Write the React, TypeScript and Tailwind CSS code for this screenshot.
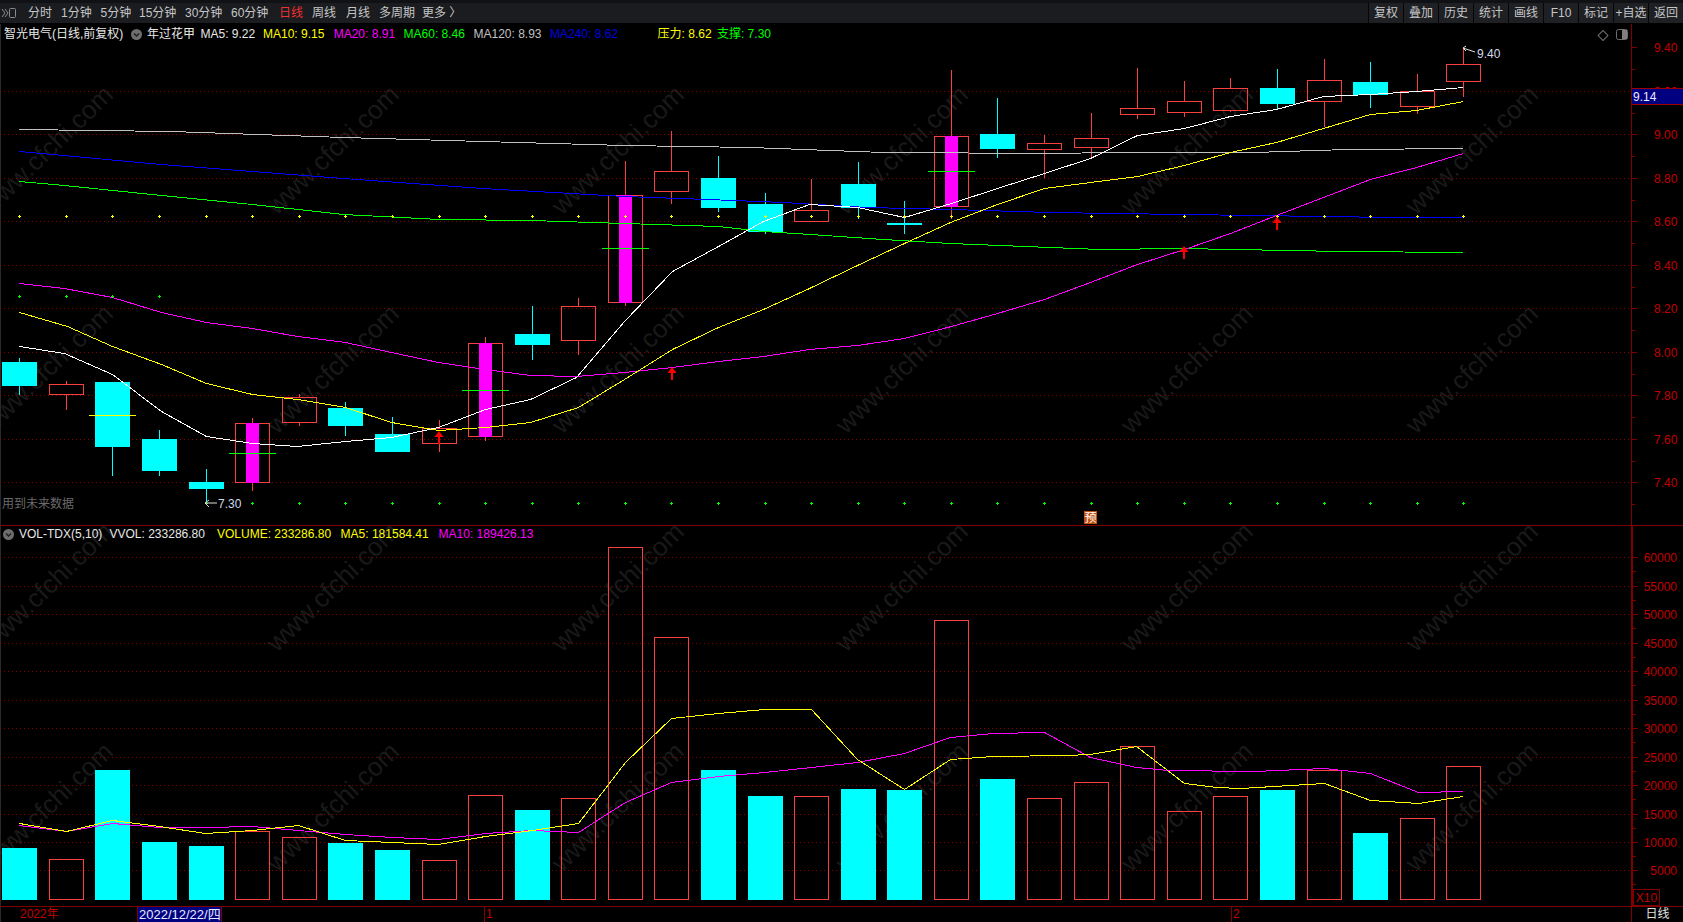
const RED = "#f84040"
const CYAN = "#00ffff"
const MAGENTA = "#ff00ff"
const YELLOW = "#ffff00"
const GRID = "#8c0000"
const AXIS = "#7c0000"
const AXIS_TEXT = "#c00000"

const periods = [
  { label: "分时", w: 33 },
  { label: "1分钟", w: 39.5 },
  { label: "5分钟", w: 38.5 },
  { label: "15分钟", w: 46 },
  { label: "30分钟", w: 46 },
  { label: "60分钟", w: 48 },
  { label: "日线", w: 33, active: true },
  { label: "周线", w: 34 },
  { label: "月线", w: 33 },
  { label: "多周期", w: 43 },
  { label: "更多 〉", w: 50 },
]

const actions = ["复权", "叠加", "历史", "统计", "画线", "F10", "标记", "+自选", "返回"]

const legend = [
  { text: "智光电气(日线,前复权)", color: "#e8e8e8", w: 127 },
  { text: "", color: "", w: 16, icon: true },
  { text: "年过花甲", color: "#e8e8e8", w: 53.5 },
  { text: "MA5: 9.22", color: "#e8e8e8", w: 62.5 },
  { text: "MA10: 9.15", color: YELLOW, w: 70.7 },
  { text: "MA20: 8.91", color: MAGENTA, w: 69.9 },
  { text: "MA60: 8.46", color: "#00ff00", w: 69.9 },
  { text: "MA120: 8.93", color: "#c0c0c0", w: 76.5 },
  { text: "MA240: 8.62", color: "#0000e0", w: 107.6 },
  { text: "压力: 8.62", color: YELLOW, w: 59.4 },
  { text: "支撑: 7.30", color: "#00ff00", w: 70 },
]

const volLegend = [
  { text: "VOL-TDX(5,10)", color: "#e8e8e8", w: 90.5 },
  { text: "VVOL: 233286.80", color: "#e8e8e8", w: 107.5 },
  { text: "VOLUME: 233286.80", color: YELLOW, w: 123.6 },
  { text: "MA5: 181584.41", color: YELLOW, w: 98 },
  { text: "MA10: 189426.13", color: MAGENTA, w: 110 },
]

// top, bottom, wick top, wick bottom, kind
type Kind = "c" | "r" | "m"
const candles: [number, number, number, number, Kind][] = [
  [362, 386, 358, 395, "c"],
  [384, 395, 381, 410, "r"],
  [382, 447, 382, 476, "c"],
  [439, 471, 430, 476, "c"],
  [482, 489, 469, 503, "c"],
  [423, 483, 418, 491, "m"],
  [397, 423, 394, 426, "r"],
  [408, 426, 402, 436, "c"],
  [434, 452, 417, 452, "c"],
  [428, 444, 420, 452, "r"],
  [343, 437, 337, 441, "m"],
  [334, 345, 306, 360, "c"],
  [306, 341, 298, 355, "r"],
  [195, 303, 161, 306, "m"],
  [171, 192, 131, 204, "r"],
  [178, 208, 156, 212, "c"],
  [204, 232, 193, 234, "c"],
  [210, 222, 179, 222, "r"],
  [184, 208, 162, 219, "c"],
  [223, 225, 201, 234, "c"],
  [136, 207, 70, 219, "m"],
  [134, 149, 98, 158, "c"],
  [143, 150, 135, 178, "r"],
  [138, 148, 113, 158, "r"],
  [108, 115, 68, 119, "r"],
  [101, 113, 81, 117, "r"],
  [88, 111, 78, 112, "r"],
  [88, 104, 69, 110, "c"],
  [80, 102, 59, 127, "r"],
  [82, 95, 62, 108, "c"],
  [91, 107, 74, 114, "r"],
  [64, 82, 48, 97, "r"],
]

const volTops = [
  848, 859, 770, 842, 846, 831, 837, 843, 850, 860, 795, 810, 798, 547, 637, 770,
  796, 796, 789, 790, 620, 779, 798, 782, 746, 811, 796, 790, 770, 833, 818, 766,
]

const cx = (i: number) => Math.round(19.3 + 46.58 * i)

const lines = {
  white: "19,346 64,353 112,374 161,411 206,436 252,443 297,446 345,441 391,437 438,427 485,409 530,399 576,377 624,321 672,271 718,246 763,221 809,204 857,207 904,217 951,203 997,188 1044,173 1090,158 1137,135 1184,128 1230,116 1276,109 1323,96 1370,94 1416,91 1463,87",
  yellow: "19,312 67,326 112,346 161,364 206,383 252,394 297,399 345,407 391,422 438,430 485,427 530,422 578,407 624,379 672,349 718,327 763,309 809,288 857,265 904,243 950,222 997,204 1044,188 1090,182 1137,176 1184,165 1230,152 1276,142 1323,128 1370,114 1416,110 1463,101",
  magenta: "19,283 64,288 112,297 161,312 206,322 252,328 297,336 345,342 391,352 438,362 485,369 530,375 576,376 624,372 672,367 718,361 763,356 809,349 857,345 904,338 951,326 997,313 1044,299 1090,282 1137,264 1184,249 1230,233 1276,215 1323,197 1370,179 1416,167 1463,153",
  green: "19,181 64,185 161,195 252,204 343,214 439,219 530,220 624,223 718,226 763,231 810,234 883,239 950,243 1050,247 1100,249 1180,248 1342,251 1463,252",
  blue: "19,151 161,164 343,178 482,188 624,196 707,199 783,202 867,207 950,209 1050,212 1113,213 1253,215 1393,217 1463,217",
  gray: "19,129 171,131 343,137 482,141 624,145 750,147 883,152 1050,153 1113,152 1253,152 1347,149 1463,148",
  volYellow: "19,823 66,831 112,820 159,826 205,833 252,830 298,825 345,840 392,842 438,844 485,836 532,830 578,823 625,762 671,718 718,713 764,709 811,709 857,759 904,789 950,759 993,756 1066,755 1090,754 1136,746 1184,783 1216,787 1240,788 1324,783 1370,800 1418,803 1463,796",
  volMagenta: "19,825 66,831 112,823 159,827 205,827 252,826 298,830 345,834 392,837 438,839 485,833 532,830 578,832 625,802 671,782 718,776 764,772 811,767 857,762 904,753 950,737 993,733 1044,732 1090,757 1136,767 1168,770 1254,771 1324,768 1370,773 1418,792 1463,791",
}

const priceGrid = [91, 134, 178, 221, 265, 308, 352, 395, 439, 482]
const priceLabels = [
  { y: 47, t: "9.40" }, { y: 91, t: "9.20" }, { y: 134, t: "9.00" }, { y: 178, t: "8.80" },
  { y: 221, t: "8.60" }, { y: 265, t: "8.40" }, { y: 308, t: "8.20" }, { y: 352, t: "8.00" },
  { y: 395, t: "7.80" }, { y: 439, t: "7.60" }, { y: 482, t: "7.40" },
]
const volLabels = [
  { y: 557, t: "60000" }, { y: 586, t: "55000" }, { y: 614, t: "50000" }, { y: 643, t: "45000" },
  { y: 671, t: "40000" }, { y: 700, t: "35000" }, { y: 728, t: "30000" }, { y: 757, t: "25000" },
  { y: 785, t: "20000" }, { y: 814, t: "15000" }, { y: 842, t: "10000" }, { y: 870, t: "5000" },
]
const ticks: [number, number, string][] = [
  [112, 415, YELLOW],
  [252, 453, "#00ff00"],
  [485, 390, "#00ff00"],
  [625, 248, "#00ff00"],
  [951, 171, "#00ff00"],
]

const wmColumns = [-10, 276, 561, 845, 1130, 1415]
const wmRows = [216, 435, 653, 873]

function Poly({ points, color }: { points: string; color: string }) {
  // half pixel shift, otherwise flat runs on whole coordinates drop out with crispEdges
  return <polyline points={points} transform="translate(0.5 0.5)" fill="none" stroke={color} strokeWidth={1} shapeRendering="crispEdges" />
}

function Plus({ x, y, color }: { x: number; y: number; color: string }) {
  return (
    <g shapeRendering="crispEdges" fill={color}>
      <rect x={x - 1} y={y} width={3} height={1} />
      <rect x={x} y={y - 1} width={1} height={3} />
    </g>
  )
}

function UpArrow({ x, y }: { x: number; y: number }) {
  return (
    <g fill="#ff0000">
      <polygon points={`${x + 1},${y} ${x + 5.5},${y + 6} ${x - 3.5},${y + 6}`} />
      <rect x={x} y={y + 5} width={2} height={8} shapeRendering="crispEdges" />
    </g>
  )
}

function Candle({ i }: { i: number }) {
  const [top, bottom, wickTop, wickBottom, kind] = candles[i]
  const x = cx(i)
  const color = kind === "c" ? CYAN : RED
  return (
    <g shapeRendering="crispEdges">
      <rect x={x} y={wickTop} width={1} height={top - wickTop} fill={color} />
      <rect x={x} y={bottom} width={1} height={wickBottom - bottom} fill={color} />
      {kind === "c" ? (
        <rect x={x - 17} y={top} width={35} height={bottom - top} fill={CYAN} />
      ) : (
        <rect x={x - 16.5} y={top + 0.5} width={34} height={bottom - top - 1} fill="none" stroke={RED} />
      )}
      {kind === "m" && <rect x={x - 6} y={top} width={13} height={bottom - top} fill={MAGENTA} />}
    </g>
  )
}

function VolBar({ i }: { i: number }) {
  const x = cx(i)
  const top = volTops[i]
  return candles[i][4] === "c" ? (
    <rect x={x - 17} y={top} width={35} height={900 - top} fill={CYAN} shapeRendering="crispEdges" />
  ) : (
    <rect x={x - 16.5} y={top + 0.5} width={34} height={899 - top} fill="none" stroke={RED} shapeRendering="crispEdges" />
  )
}

function GridLine({ y }: { y: number }) {
  return <line x1={0} x2={1631} y1={y + 0.5} y2={y + 0.5} stroke={GRID} strokeDasharray="1 3" shapeRendering="crispEdges" />
}

function Tick({ x, y, w, color }: { x: number; y: number; w: number; color: string }) {
  return <rect x={x} y={y} width={w} height={1} fill={color} shapeRendering="crispEdges" />
}

function DropIcon() {
  return (
    <svg width="11" height="11" viewBox="0 0 11 11">
      <circle cx="5.5" cy="5.5" r="5.5" fill="#6e6e6e" />
      <path d="M3 4.5 L5.5 7 L8 4.5" fill="none" stroke="#1c1c1c" strokeWidth="1.3" />
    </svg>
  )
}

function Toolbar() {
  return (
    <div className="flex h-[24px] shrink-0 border-t-[3px] border-b border-t-[#101114] border-b-black bg-[#1a1c20] text-[12px] text-[#c6c6c6]">
      <div className="flex w-[28px] items-center pl-[1px]">
        <svg width="16" height="12" viewBox="0 0 16 12" fill="none">
          <path d="M1 2 L4 6 L1 10 M4 2 L7 6 L4 10" stroke="#8a8a8a" />
          <rect x="8.5" y="1.5" width="6" height="9" rx="1" stroke="#8a8a8a" />
        </svg>
      </div>
      <div className="flex items-center">
        {periods.map((p) => (
          <span key={p.label} className={`whitespace-nowrap ${p.active ? "text-[#f03030]" : ""}`} style={{ width: p.w }}>
            {p.label}
          </span>
        ))}
      </div>
      <div className="ml-auto flex">
        {actions.map((a) => (
          <div key={a} className="flex w-[35px] items-center justify-center whitespace-nowrap border-l border-l-[#060606] bg-[#1e2024]">
            {a}
          </div>
        ))}
      </div>
    </div>
  )
}

function Watermarks() {
  return (
    <svg className="absolute left-0 top-0" width="1683" height="898" viewBox="0 24 1683 898">
      {wmRows.map((y) =>
        wmColumns.map((x) => (
          <text key={`${x}-${y}`} x={x} y={y} fontSize="26" fill="#191919" transform={`rotate(-44 ${x} ${y})`}>
            www.cfchi.com
          </text>
        ))
      )}
    </svg>
  )
}

function PricePanel() {
  return (
    <div className="relative flex h-[502px] shrink-0 border-b border-b-[#800000]">
      <div className="relative w-[1631px] shrink-0">
        <svg className="block" width="1631" height="501" viewBox="0 24 1631 501">
          {priceGrid.map((y) => <GridLine key={y} y={y} />)}
          {candles.map((_, i) => <Candle key={i} i={i} />)}
          {ticks.map(([x, y, c]) => (
            <rect key={x} x={x - 23} y={y} width={47} height={1} fill={c} shapeRendering="crispEdges" />
          ))}
          <Poly points={lines.gray} color="#c0c0c0" />
          <Poly points={lines.blue} color="#0000ff" />
          <Poly points={lines.green} color="#00ff00" />
          <Poly points={lines.magenta} color={MAGENTA} />
          <Poly points={lines.yellow} color={YELLOW} />
          <Poly points={lines.white} color="#ffffff" />
          {candles.map((_, i) => <Plus key={i} x={cx(i)} y={216} color={YELLOW} />)}
          {[0, 1, 2, 3].map((i) => <Plus key={i} x={cx(i)} y={296} color="#00ff00" />)}
          {candles.map((_, i) => (i > 3 ? <Plus key={i} x={cx(i)} y={503} color="#00ff00" /> : null))}
          <UpArrow x={438} y={431} />
          <UpArrow x={671} y={367} />
          <UpArrow x={1183} y={246} />
          <UpArrow x={1276} y={217} />
          <path d="M205 503 H217 M205 503 L209 500 M205 503 L209 507" stroke="#e0e0e0" fill="none" />
          <text x={218} y={508} fontSize="12" fill="#d0dce8">7.30</text>
          <path d="M1463 48 L1475 52 M1463 48 L1466 46 M1463 48 L1466 51" stroke="#e0e0e0" fill="none" />
          <text x={1477} y={58} fontSize="12" fill="#d0dce8">9.40</text>
          <text x={2} y={508} fontSize="12" fill="#6a6a6a">用到未来数据</text>
        </svg>
        <div className="absolute left-0 top-0 flex h-[20px] items-center pl-[4px] text-[12px]">
          {legend.map((l, i) => (
            <span key={i} className="flex items-center whitespace-nowrap" style={{ width: l.w, color: l.color }}>
              {l.icon ? <DropIcon /> : l.text}
            </span>
          ))}
        </div>
        <svg className="absolute left-[1597px] top-[4px]" width="32" height="14" viewBox="0 0 32 14" fill="none">
          <rect x="2.5" y="4" width="7" height="7" transform="rotate(45 6 7.5)" stroke="#707070" />
          <rect x="19.5" y="1.5" width="11" height="10" rx="2" stroke="#707070" />
          <rect x="25" y="2" width="5" height="9" fill="#808080" />
        </svg>
        <div className="absolute left-[1084px] top-[487px] flex h-[13px] w-[13px] items-center justify-center bg-[#c0500f] text-[12px] leading-none text-white">
          预
        </div>
      </div>
      <div className="relative w-[52px] shrink-0 border-l border-l-[#800000]">
        <svg className="block" width="51" height="501" viewBox="1632 24 51 501">
          {priceLabels.map((l) => (
            <g key={l.t}>
              <Tick x={1632} y={l.y} w={5} color={AXIS} />
              <Tick x={1632} y={l.y + 22} w={3} color={AXIS} />
              <text x={1654} y={l.y + 5} fontSize="12" fill={AXIS_TEXT}>{l.t}</text>
            </g>
          ))}
        </svg>
        <div className="absolute left-0 top-[64px] flex h-[17px] w-full items-center border-y border-y-[#a00000] bg-[#000080] pl-[1px] text-[12px] text-[#e8ecff]">
          9.14
        </div>
      </div>
    </div>
  )
}

function VolumePanel() {
  return (
    <div className="relative flex h-[380px] shrink-0">
      <div className="relative w-[1631px] shrink-0">
        <svg className="block" width="1631" height="380" viewBox="0 526 1631 380">
          {volLabels.map((l) => <GridLine key={l.t} y={l.y} />)}
          {volTops.map((_, i) => <VolBar key={i} i={i} />)}
          <Poly points={lines.volMagenta} color={MAGENTA} />
          <Poly points={lines.volYellow} color={YELLOW} />
        </svg>
        <div className="absolute left-0 top-0 flex h-[16px] items-center pl-[3px] text-[12px]">
          <span className="flex w-[16px] items-center"><DropIcon /></span>
          {volLegend.map((l) => (
            <span key={l.text} className="whitespace-nowrap" style={{ width: l.w, color: l.color }}>
              {l.text}
            </span>
          ))}
        </div>
      </div>
      <div className="relative w-[52px] shrink-0 border-l-2 border-l-[#800000]">
        <svg className="block" width="50" height="380" viewBox="1633 526 50 380">
          {volLabels.map((l) => (
            <g key={l.t}>
              <Tick x={1633} y={l.y} w={5} color={AXIS} />
              <Tick x={1633} y={l.y + 14} w={3} color={AXIS} />
              <text x={1677} y={l.y + 5} fontSize="12" textAnchor="end" fill={AXIS_TEXT}>{l.t}</text>
            </g>
          ))}
        </svg>
        <div className="absolute bottom-0 left-0 flex h-[17px] w-[27px] items-center justify-center border border-[#800000] bg-black text-[12px] text-[#c00000]">
          X10
        </div>
      </div>
    </div>
  )
}

function DateAxis() {
  return (
    <div className="flex h-[16px] shrink-0 border-t border-t-[#800000] text-[12px] leading-[15px] text-[#c00000]">
      <div className="w-[137px] pl-[20px]">2022年</div>
      <div className="w-[85px] whitespace-nowrap border-x border-x-[#800000] bg-[#000080] pl-[1px] text-[13px] text-[#e8ecff]">2022/12/22/四</div>
      <div className="w-[262px]" />
      <div className="w-[747px] border-l border-l-[#800000] pl-[1px]">1</div>
      <div className="w-[400px] border-l border-l-[#800000] pl-[1px]">2</div>
      <div className="flex w-[52px] justify-center border-l border-l-[#800000] text-[#e0e0e0]">日线</div>
    </div>
  )
}

export default function App() {
  return (
    <div className="flex h-[922px] w-[1683px] flex-col overflow-hidden bg-black font-['Liberation_Sans','Noto_Sans_CJK_SC',sans-serif]">
      <Toolbar />
      <div className="relative flex flex-1 flex-col border-l border-l-[#2a2a2a]">
        <Watermarks />
        <div className="relative -ml-px flex flex-col">
          <PricePanel />
          <VolumePanel />
          <DateAxis />
        </div>
      </div>
    </div>
  )
}
